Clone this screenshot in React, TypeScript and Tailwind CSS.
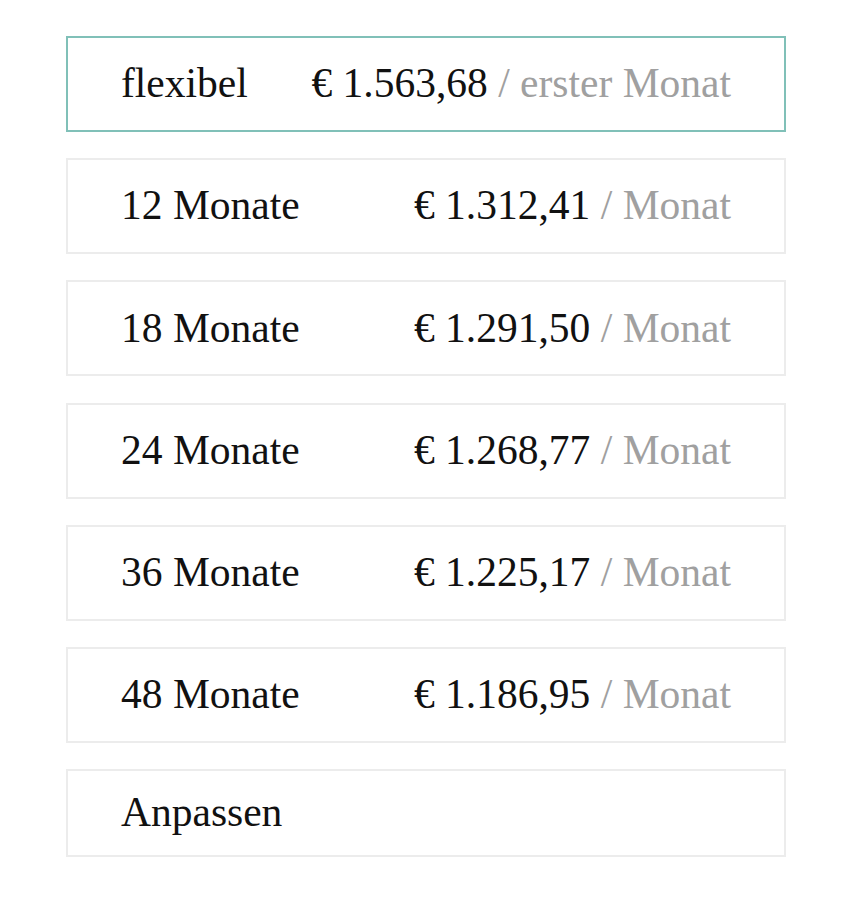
import React from 'react';

const plans = [
  { label: '12 Monate', price: '€ 1.312,41', unit: '/ Monat' },
  { label: '18 Monate', price: '€ 1.291,50', unit: '/ Monat' },
  { label: '24 Monate', price: '€ 1.268,77', unit: '/ Monat' },
  { label: '36 Monate', price: '€ 1.225,17', unit: '/ Monat' },
  { label: '48 Monate', price: '€ 1.186,95', unit: '/ Monat' },
];

export default function App() {
  return (
    <div
      className="min-h-screen bg-white pt-[36px]"
      style={{ fontFamily: '"Liberation Serif", "Times New Roman", serif' }}
    >
      <div className="mx-auto flex w-[720px] flex-col gap-[26.2px] text-[41.5px] leading-none text-[#111]">
        <div className="flex h-[96px] items-center justify-between border-2 border-[#80c0b8] px-[53px]">
          <span>flexibel</span>
          <span>
            € 1.563,68 <span className="text-[#a0a0a0]">/ erster Monat</span>
          </span>
        </div>

        {plans.map((p) => (
          <div
            key={p.label}
            className="flex h-[96px] items-center justify-between border-2 border-[#ececec] px-[53px]"
          >
            <span>{p.label}</span>
            <span>
              {p.price} <span className="text-[#a0a0a0]">{p.unit}</span>
            </span>
          </div>
        ))}

        <div className="flex h-[88px] items-center border-2 border-[#ececec] px-[53px]">
          <span>Anpassen</span>
        </div>
      </div>
    </div>
  );
}
